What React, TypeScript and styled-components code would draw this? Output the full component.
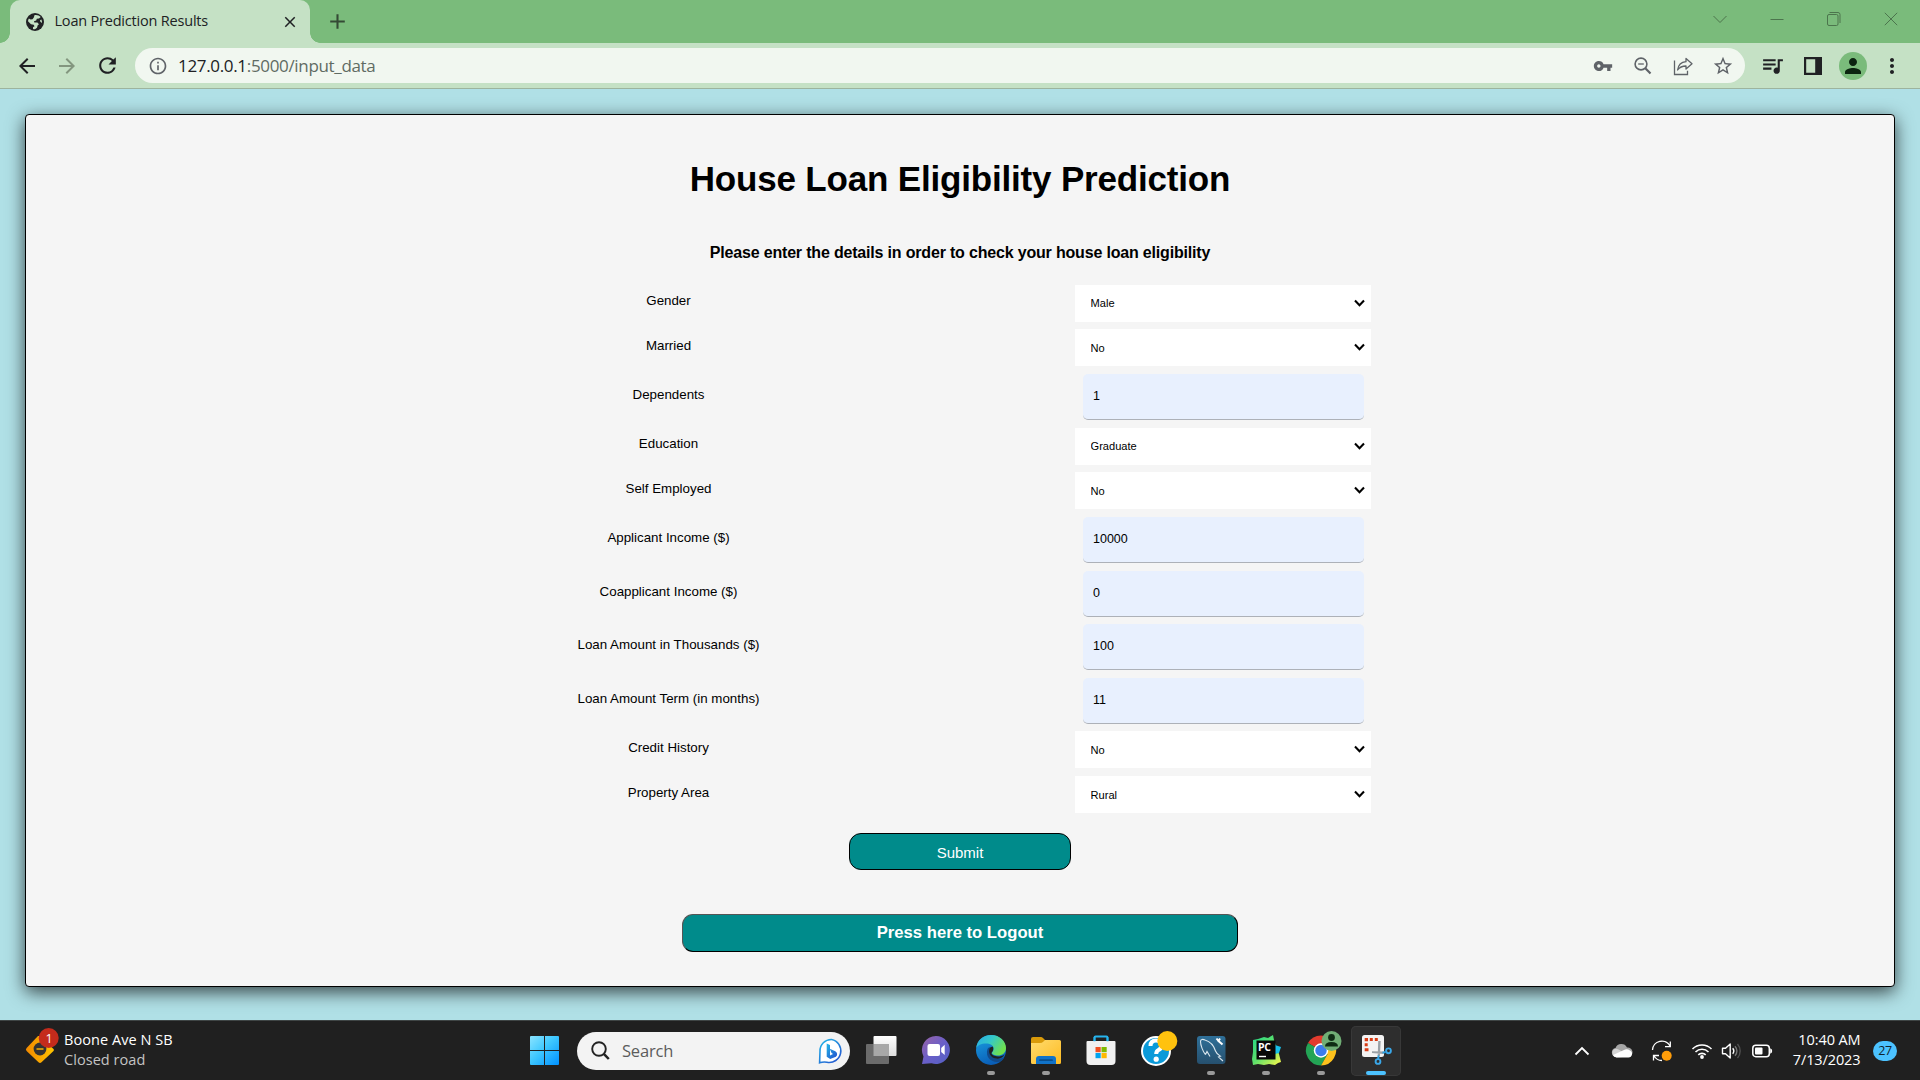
import React from "react";
import styled, { createGlobalStyle } from "styled-components";
import {
  MdArrowBack,
  MdArrowForward,
  MdClose,
  MdInfoOutline,
  MdMoreVert,
  MdPerson,
  MdQueueMusic,
  MdRefresh,
  MdStarBorder,
  MdVpnKey,
  MdAdd,
} from "react-icons/md";

const ui = `"Open Sans", "Noto Sans", sans-serif`;
const arial = `"Liberation Sans", Arial, sans-serif`;

const GlobalStyle = createGlobalStyle`
  *, *::before, *::after { box-sizing: border-box; }
  html, body { margin: 0; padding: 0; }
  body { width: 1920px; height: 1080px; overflow: hidden; }
  svg { display: block; flex: none; }
`;

const Screen = styled.div`
  width: 1920px;
  height: 1080px;
  display: flex;
  flex-direction: column;
  background: #b0e0e6;
  overflow: hidden;
`;

/* ---------- Browser ---------- */

const TabStrip = styled.header`
  height: 43px;
  flex: none;
  display: flex;
  background: #7abb7b;
  padding-left: 10px;
  font-family: ${ui};
`;

const Tab = styled.div`
  position: relative;
  width: 300px;
  height: 43px;
  display: flex;
  align-items: center;
  padding: 0 11px 0 15px;
  background: #c5e1c5;
  border-radius: 10px 10px 0 0;
  color: #202124;
  &::before,
  &::after {
    content: "";
    position: absolute;
    bottom: 0;
    width: 10px;
    height: 10px;
  }
  &::before {
    left: -10px;
    background: radial-gradient(circle at 0 0, transparent 9.5px, #c5e1c5 10px);
  }
  &::after {
    right: -10px;
    background: radial-gradient(circle at 100% 0, transparent 9.5px, #c5e1c5 10px);
  }
`;

const TabTitle = styled.span`
  flex: 1;
  margin-left: 9.5px;
  font-size: 14.5px;
  line-height: 20px;
  letter-spacing: -0.2px;
  white-space: nowrap;
  padding-bottom: 1px;
`;

const NewTab = styled.div`
  width: 55px;
  display: flex;
  align-items: center;
  justify-content: center;
  color: #344a35;
`;

const WindowControls = styled.div`
  margin-left: auto;
  width: 229px;
  height: 37px;
  display: grid;
  grid-template-columns: repeat(4, 57px);
  place-items: center;
`;

const Toolbar = styled.nav`
  height: 46px;
  flex: none;
  display: flex;
  align-items: center;
  background: #c5e1c5;
  border-bottom: 1px solid #9db49e;
  padding-left: 7px;
  color: #202124;
  font-family: ${ui};
`;

const NavButton = styled.div<{ $dim?: boolean }>`
  width: 40px;
  display: flex;
  justify-content: center;
  color: ${(p) => (p.$dim ? "#83967f" : "#202124")};
`;

const AddressBar = styled.div`
  width: 1610px;
  height: 35px;
  margin-left: 8px;
  display: flex;
  align-items: center;
  padding: 0 2.5px 0 12.5px;
  border-radius: 18px;
  background: #f1f7f0;
  color: #5f6368;
`;

const Url = styled.span`
  flex: 1;
  margin-left: 10.5px;
  font-size: 17px;
  line-height: 24px;
  letter-spacing: -0.33px;
  color: #5f6b63;
  b {
    font-weight: 400;
    color: #202124;
  }
`;

const AddressAction = styled.div`
  width: 40px;
  display: flex;
  justify-content: center;
`;

const ToolAction = styled.div<{ $ml?: number }>`
  width: 40px;
  margin-left: ${(p) => p.$ml ?? 0}px;
  display: flex;
  justify-content: center;
`;

const Avatar = styled.div`
  width: 28px;
  height: 28px;
  border-radius: 50%;
  background: #7abb7b;
  color: #0b2410;
  display: grid;
  place-items: center;
`;

/* ---------- Page ---------- */

const Page = styled.main`
  flex: 1;
  padding: 25px 25px 33px;
  display: flex;
  font-family: ${arial};
  color: #000;
`;

const Card = styled.section`
  flex: 1;
  display: flex;
  flex-direction: column;
  align-items: center;
  background: #f5f5f5;
  border: 1px solid #000;
  border-radius: 4px;
  box-shadow: 0 5px 18px rgba(0, 0, 0, 0.7);
`;

const Title = styled.h1`
  margin: 44px 0 0;
  font-size: 35px;
  line-height: 40px;
  font-weight: 700;
  letter-spacing: -0.18px;
`;

const Subtitle = styled.h4`
  margin: 44px 0 0;
  font-size: 16px;
  line-height: 20px;
  font-weight: 700;
  letter-spacing: -0.18px;
`;

const Form = styled.form`
  margin-top: 22px;
  padding-left: 274px;
  width: 1390px;
  display: grid;
  grid-template-columns: 259px 1fr;
  grid-template-rows: 44px 45px 54px 44px 45px 54px 53px 54px 53px 45px 37px;
  align-items: start;
`;

const Label = styled.label<{ $height: number }>`
  height: ${(p) => p.$height}px;
  display: flex;
  align-items: center;
  justify-content: center;
  font-size: 13.33px;
  white-space: nowrap;
`;

const SelectBox = styled.div`
  position: relative;
  width: 296px;
  height: 37px;
  margin-left: 277px;
  svg {
    position: absolute;
    right: 6px;
    top: 14px;
    pointer-events: none;
  }
`;

const Select = styled.select<{ $raised?: boolean }>`
  appearance: none;
  width: 100%;
  height: 100%;
  border: 0;
  border-radius: 0;
  padding: 0 15.5px ${(p) => (p.$raised ? 2 : 0)}px;
  background: #fff;
  color: #000;
  font-family: ${arial};
  font-size: 11.1px;
`;

const Input = styled.input`
  width: 281px;
  height: 46px;
  margin-left: 285px;
  padding: 0 10px 2px;
  border: 0;
  border-bottom: 1px solid #adb1b8;
  border-radius: 5px;
  background: #e8f0fe;
  color: #000;
  font-family: ${arial};
  font-size: 12.5px;
`;

const Submit = styled.button`
  margin-top: 20px;
  width: 222px;
  height: 37px;
  padding: 2px 0 0;
  border: 1px solid #000;
  border-radius: 12px;
  background: #008b8b;
  color: #fff;
  font-family: ${arial};
  font-size: 15px;
`;

const Logout = styled.button`
  margin-top: 44px;
  width: 556px;
  height: 38px;
  padding: 0 0 1px;
  border: 1px solid;
  border-color: #555 #000 #000 #555;
  border-radius: 11px;
  background: #008b8b;
  color: #fff;
  font-family: ${arial};
  font-size: 16.67px;
  font-weight: 700;
`;

/* ---------- Taskbar ---------- */

const Taskbar = styled.footer`
  height: 60px;
  flex: none;
  display: flex;
  align-items: center;
  background: #202020;
  border-top: 1px solid #3f4545;
  color: #fff;
  font-family: ${ui};
`;

const Widget = styled.div`
  width: 530px;
  display: flex;
  align-items: center;
  gap: 4px;
  padding-left: 24px;
`;

const RoadSlot = styled.div`
  height: 48px;
`;

const TwoLines = styled.div<{ $right?: boolean }>`
  display: flex;
  flex-direction: column;
  padding-bottom: 2px;
  text-align: ${(p) => (p.$right ? "right" : "left")};
  font-size: 14.5px;
  line-height: 20px;
  letter-spacing: ${(p) => (p.$right ? -0.1 : 0.05)}px;
  white-space: nowrap;
`;

const Muted = styled.span`
  color: #c4c4c4;
`;

const SearchPill = styled.div`
  margin-left: 18px;
  width: 273px;
  height: 38px;
  border-radius: 19px;
  background: #f3f3f3;
  display: flex;
  align-items: center;
  padding: 0 6px 0 14px;
  color: #5c5c5c;
  font-size: 16.5px;
  letter-spacing: -0.2px;
`;

const SearchText = styled.span`
  flex: 1;
  margin-left: 12px;
`;

const Apps = styled.div`
  margin-left: 3.5px;
  display: flex;
`;

const AppSlot = styled.div`
  width: 55px;
  height: 59px;
  display: flex;
  justify-content: center;
  align-items: center;
`;

const Tile = styled.div<{ $active?: boolean }>`
  width: 50px;
  height: 50px;
  border-radius: 5px;
  background: ${(p) => (p.$active ? "#2e2e2e" : "transparent")};
  box-shadow: ${(p) => (p.$active ? "inset 0 0 0 1px #383838" : "none")};
  display: flex;
  flex-direction: column;
  align-items: center;
  padding-top: 4px;
`;

const IconSlot = styled.div`
  width: 32px;
  height: 40px;
  display: flex;
  align-items: center;
  justify-content: center;
`;

const Running = styled.span<{ $active?: boolean }>`
  width: ${(p) => (p.$active ? 20 : 8)}px;
  height: 4px;
  margin-top: 1px;
  border-radius: 2px;
  background: ${(p) => (p.$active ? "#4cc2ff" : "#9a9a9a")};
`;

const Tray = styled.div`
  margin-left: auto;
  display: flex;
  align-items: center;
  padding-right: 23px;
`;

const TrayIcon = styled.div<{ $w: number }>`
  width: ${(p) => p.$w}px;
  display: flex;
  justify-content: center;
`;

const Clock = styled.div`
  width: 79px;
  margin-right: 12.5px;
  display: flex;
  justify-content: flex-end;
`;

const Count = styled.div`
  width: 24px;
  height: 20px;
  border-radius: 10px;
  background: #4cc2ff;
  color: #10222c;
  font-size: 12.5px;
  line-height: 19px;
  letter-spacing: -0.3px;
  text-align: center;
`;

/* ---------- Icons ---------- */

const Globe = () => (
  <svg width="20" height="20" viewBox="0 0 20 20">
    <circle cx="10" cy="10" r="9" fill="#202124" />
    <path
      d="M9.600 3C12 2.600 14.300 3.300 15.700 5L14 6.600 11.800 6.800 11.200 8.400 9 9.200 9.300 10.400H12.400L14 12.300 12.700 13.300 12 15.700 10.300 17.100Q9 17.200 8 16.900L8 15.300 9.500 14.300 8.700 12.700 6 12.200 3 9.200Q3.100 7.700 3.900 6.400L5.600 7.500 7.500 7.200 8.800 5.600Z"
      fill="#c5e1c5"
    />
    <path d="M16.400 7.500Q17.200 9.300 16.900 11L15.400 9.700 15 8.300Z" fill="#c5e1c5" />
  </svg>
);

const ZoomOut = () => (
  <svg width="20" height="20" viewBox="0 0 20 20" fill="none" stroke="#5f6368">
    <circle cx="8" cy="8" r="5.900" strokeWidth="1.600" />
    <path d="M12.300 12.300 17.500 17.500" strokeWidth="2.200" />
    <path d="M5.200 8h5.600" strokeWidth="1.300" />
  </svg>
);

const Share = () => (
  <svg width="22" height="20" viewBox="0 0 22 20" fill="none" stroke="#5f6368" strokeWidth="1.300">
    <path d="M2.500 4.500v14h13V14.800" />
    <path d="M14 2.400 20 7.700 14 13V10C10.300 10 7.700 11 5.600 14 6.200 9.400 9 6.200 14 5.700Z" strokeLinejoin="round" />
  </svg>
);

const SidePanel = () => (
  <svg width="18" height="18" viewBox="0 0 18 18">
    <path fill="#202124" fillRule="evenodd" d="M0 0h18v18H0ZM2.200 2.200v13.600h9V2.200Z" />
  </svg>
);

const Chevron = () => (
  <svg width="11" height="9" viewBox="0 0 11 9" fill="none" stroke="#000" strokeWidth="2.100">
    <path d="M1 1.600 5.500 6.200 10 1.600" />
  </svg>
);

const Road = () => (
  <svg width="36" height="38" viewBox="0 0 36 38">
    <defs>
      <linearGradient id="road" x1="0" x2="1">
        <stop offset="0" stopColor="#f28a00" />
        <stop offset="1" stopColor="#ffc400" />
      </linearGradient>
    </defs>
    <path d="M16 9 29.500 22a1.500 1.500 0 0 1 0 2L17.500 35.200a2.200 2.200 0 0 1-3 0L2.600 24a2.200 2.200 0 0 1 0-3L14 9Z" fill="url(#road)" />
    <circle cx="16" cy="22" r="6.400" fill="#333" />
    <path d="M12.500 22h7" stroke="#f7b000" strokeWidth="1.500" />
    <circle cx="24.700" cy="11" r="10" fill="#c42b1c" />
    <text x="25" y="15.500" fill="#fff" fontSize="12.500" textAnchor="middle" fontFamily="Open Sans, sans-serif">1</text>
  </svg>
);

const WindowsLogo = () => (
  <svg width="29" height="29" viewBox="0 0 29 29">
    <defs>
      <linearGradient id="win" x1="0" y1="0" x2="1" y2="1">
        <stop offset="0" stopColor="#8be4ff" />
        <stop offset=".45" stopColor="#3fc8ff" />
        <stop offset="1" stopColor="#0091ff" />
      </linearGradient>
    </defs>
    <path fill="url(#win)" d="M1 0h13v14H0V1Q0 0 1 0ZM15 0h13q1 0 1 1v13H15ZM0 15h14v14H1q-1 0-1-1ZM15 15h14v13q0 1-1 1H15Z" />
  </svg>
);

const Glass = () => (
  <svg width="19" height="20" viewBox="0 0 19 20" fill="none" stroke="#222">
    <circle cx="8" cy="8" r="6.800" strokeWidth="1.900" />
    <path d="M12.800 12.800 17.800 18" strokeWidth="2.500" />
  </svg>
);

const Bing = () => (
  <svg width="26" height="26" viewBox="0 0 26 26">
    <defs>
      <linearGradient id="bing" x1="0" y1="0" x2=".8" y2="1">
        <stop offset="0" stopColor="#23b8e8" />
        <stop offset="1" stopColor="#2458d0" />
      </linearGradient>
    </defs>
    <path d="M13.500 1.500A11.300 11.300 0 1 1 9 24.200Q5 23.600 1.600 24.800L2 13A11.300 11.300 0 0 1 13.500 1.500Z" fill="#fff" stroke="url(#bing)" strokeWidth="1.600" />
    <path d="M8.700 5.500 12 7v10.500l3-1.600-1.600-1.100-1.700-4 5.600 2.500c2.300 1.400 2.500 4 .6 5.400L12.200 21 8.700 18.800Z" fill="url(#bing)" />
  </svg>
);

const TaskView = () => (
  <svg width="32" height="32" viewBox="0 0 32 32">
    <defs>
      <linearGradient id="tv" x1="0" y1="0" x2="0" y2="1">
        <stop offset="0" stopColor="#fff" />
        <stop offset="1" stopColor="#ddd" />
      </linearGradient>
    </defs>
    <rect x="8.500" y="2" width="23" height="20" rx="1" fill="url(#tv)" />
    <rect x="1" y="10" width="23" height="20" rx="1" fill="#6b6b6b" />
    <path d="M8.500 10H24v12H8.500Z" fill="#a8a8a8" />
  </svg>
);

const Chat = () => (
  <svg width="32" height="32" viewBox="0 0 32 32">
    <defs>
      <linearGradient id="chat" x1="0" y1="0" x2="1" y2="1">
        <stop offset="0" stopColor="#9a63a6" />
        <stop offset=".5" stopColor="#6a5fc8" />
        <stop offset="1" stopColor="#5360c4" />
      </linearGradient>
    </defs>
    <path d="M16 2a14 14 0 1 1-4.500 27.300L2 30l1.500-7.500A14 14 0 0 1 16 2Z" fill="url(#chat)" />
    <rect x="7.500" y="10" width="12.500" height="12" rx="2" fill="#fff" />
    <path d="m21.200 14 3.500-3.200V21L21.200 18Z" fill="#fff" />
  </svg>
);

const Edge = () => (
  <svg width="32" height="32" viewBox="0 0 32 32">
    <defs>
      <linearGradient id="e1" x1="0" y1="0" x2="1" y2=".5">
        <stop offset="0" stopColor="#27a9e8" />
        <stop offset=".5" stopColor="#35c8c8" />
        <stop offset="1" stopColor="#6fe04f" />
      </linearGradient>
      <linearGradient id="e2" x1="0" y1="0" x2=".4" y2="1">
        <stop offset="0" stopColor="#1ba1e2" />
        <stop offset="1" stopColor="#0a5fb8" />
      </linearGradient>
    </defs>
    <circle cx="16" cy="16" r="15" fill="url(#e2)" />
    <path d="M1.200 14C2 6 8.500 1 16 1c9 0 15 6.500 15 13 0 5-4 7.500-8 7.500-3.600 0-6-1.400-6-2.600 0-.9 1.600-1.700 1.600-4.200C18.600 11 15 9.500 11 9.500 6 9.500 2.500 11.500 1.200 14Z" fill="url(#e1)" />
    <path d="M12.500 15c-2.500 8 3.500 13 9.500 13 3.500 0 6-1.500 7.200-4.500-2.200 1-4 1.200-6 1.200-5 0-8.700-3-8.700-6.700 0-2.500 1.500-4 4.200-4.500-3-1.300-5.400-.3-6.200 1.500Z" fill="#114a8b" />
    <path d="M29.500 20.500c-2 1.500-4.500 2-6.500 2-4 0-6.500-1.700-6.500-3.400 0-1 1.800-1.600 1.800-4.400 0-1-.5-1.800-1-2.200-2 .5-3.500 2.500-3.200 5.500.5 4.500 5 7 9 6.700 3-.2 5-1.500 6.400-4.200Z" fill="#202020" />
  </svg>
);

const Folder = () => (
  <svg width="32" height="32" viewBox="0 0 32 32">
    <defs>
      <linearGradient id="fold" x1="0" y1="0" x2="1" y2="1">
        <stop offset="0" stopColor="#ffdb6e" />
        <stop offset="1" stopColor="#fdbb22" />
      </linearGradient>
    </defs>
    <path d="M1 5q0-2 2-2h8q1 0 2 1l2 2v8H1Z" fill="#d99a0a" />
    <path d="M1 9h9q2 0 3.500-1.500L15 6h14.500Q31 6 31 7.500v21q0 1.500-1.500 1.500h-27Q1 30 1 28.500Z" fill="url(#fold)" />
    <path d="M6 30v-5q0-3 3-3h14q3 0 3 3v5Z" fill="#1173c9" />
    <path d="M10 26.200h12" stroke="#094f8f" strokeWidth="1.800" strokeLinecap="round" />
  </svg>
);

const Store = () => (
  <svg width="32" height="32" viewBox="0 0 32 32">
    <path d="M9.500 9V3.500q0-1 1-1h11q1 0 1 1V9" fill="none" stroke="#26b4ee" strokeWidth="1.900" />
    <path d="M1.500 8q0-1 1-1h27q1 0 1 1v19q0 4-4 4h-21q-4 0-4-4Z" fill="#f1f1f1" />
    <path d="M9.500 3v4.300M22.500 3v4.300" stroke="#26b4ee" strokeWidth="1.900" />
    <path fill="#f25022" d="M10.500 13h5.200v5.200h-5.200z" />
    <path fill="#7fba00" d="M16.500 13h5.200v5.200h-5.200z" />
    <path fill="#00a4ef" d="M10.500 19h5.200v5.200h-5.200z" />
    <path fill="#ffb900" d="M16.500 19h5.200v5.200h-5.200z" />
  </svg>
);

const Help = () => (
  <svg width="44" height="38" viewBox="-5.500 1.500 44 38">
    <circle cx="16.500" cy="21.500" r="14" fill="#0b9ad9" stroke="#fff" strokeWidth="2" />
    <path d="M11 16.500q0-5.500 5.500-5.500t5.500 5q0 3-3 4.600-2.300 1.200-2.300 4" fill="none" stroke="#fff" strokeWidth="4" />
    <circle cx="16.700" cy="29.700" r="2.600" fill="#fff" />
    <circle cx="27.800" cy="11.500" r="10" fill="#ffc20e" />
  </svg>
);

const MySql = () => (
  <svg width="32" height="32" viewBox="0 0 32 32">
    <defs>
      <linearGradient id="sql" x1="0" y1="0" x2="0" y2="1">
        <stop offset="0" stopColor="#2f7099" />
        <stop offset="1" stopColor="#26506e" />
      </linearGradient>
    </defs>
    <rect x="2" y="2" width="28.500" height="28" rx="3" fill="url(#sql)" />
    <path d="M10.500 20.500C8 18 5.500 11 5.500 7.500 5.500 5 8 5 10 6c5 1.500 9 6 10.500 11 .8 2.500 2.500 3.500 5 5.200l-2 .8 4.500 4M10.500 20.500l1.500-3 3 5" fill="none" stroke="#dbe7ee" strokeWidth="1.100" />
    <path d="m21.500 4.500 2 2.500M25 4.500 23.500 7 27.500 10.500" stroke="#fff" strokeWidth="2" fill="none" />
  </svg>
);

const PyCharm = () => (
  <svg width="32" height="32" viewBox="0 0 32 32">
    <defs>
      <linearGradient id="pc" x1="0" y1="0" x2="1" y2="1">
        <stop offset="0" stopColor="#21d789" />
        <stop offset=".5" stopColor="#5fe06a" />
        <stop offset="1" stopColor="#fcf84a" />
      </linearGradient>
    </defs>
    <path d="m3 6 5-1 6-2 4 1 5-3 1 5 2 6 3 8 2 8-3 1-3 2-6-1-5 1-6-1-5 1-1-6 1-7Z" fill="url(#pc)" />
    <path d="m25 11 6 2-2 6-4 1Z" fill="#17bfe8" />
    <path d="M6.500 6.500h19v19h-19z" fill="#080808" />
    <text x="8" y="16.800" fill="#fff" fontSize="10.500" fontWeight="700" fontFamily="Open Sans, sans-serif" letterSpacing="-.3">PC</text>
    <path d="M9 22.500h7" stroke="#fff" strokeWidth="1.400" />
  </svg>
);

const Chrome = () => (
  <svg width="42" height="38" viewBox="-3 1.500 42 38">
    <path d="M18 21 5 13.500A15 15 0 0 1 31 13.500Z" fill="#e33b2e" />
    <path d="M18 21 5 13.500A15 15 0 0 0 18 36L24.500 24.700Z" fill="#23a455" />
    <path d="M18 21 31 13.500A15 15 0 0 1 18 36l6.500-11.200Z" fill="#fdc11c" />
    <path d="M18 13.800h13.200L24.500 17Z" fill="#e33b2e" />
    <circle cx="18" cy="21" r="7.200" fill="#fff" />
    <circle cx="18" cy="21" r="5.700" fill="#3b7ded" />
    <circle cx="28.500" cy="11.500" r="10" fill="#70ae75" />
    <circle cx="28.500" cy="8" r="3.400" fill="#0f2c14" />
    <path d="M22 17q0-4.500 6.500-4.500t6.500 4.500Z" fill="#0f2c14" />
  </svg>
);

const Snip = () => (
  <svg width="34" height="32" viewBox="0 0 34 32">
    <rect x="3" y="1" width="22" height="22" rx="2.500" fill="#f3f3f3" />
    <path
      d="M5.700 4h3.300v3.300H5.700ZM10.800 4h3v3h-3ZM15.800 4h3v3h-3ZM5.700 9.300h3v3h-3ZM5.700 14.300h3.800v3H5.700Z"
      fill="#d83b14"
    />
    <path d="M19.200 7h2.500l-.8 15h-2.200ZM13 17.300l11.500.2v2.400L13 19Z" fill="#9aa1a6" />
    <path d="m19.700 21.500-.7 3.500M23.500 18.700l3-.7" stroke="#2b9fe0" strokeWidth="2" />
    <circle cx="19" cy="27.500" r="2.400" fill="none" stroke="#3aa7e8" strokeWidth="1.900" />
    <circle cx="29.500" cy="16.800" r="2.400" fill="none" stroke="#3aa7e8" strokeWidth="1.900" />
  </svg>
);

const Cloud = () => (
  <svg width="22" height="16" viewBox="0 0 22 16">
    <path d="M5 14a4.500 4.500 0 0 1-.5-8.900A6.300 6.300 0 0 1 16 4.600a4.700 4.700 0 0 1 1.500 9.400Z" fill="#a5a5a5" />
    <path d="M5.500 14.300a4.500 4.500 0 0 1-2-8.300Q6 5 9 7.200l9 6.500Z" fill="#d4d4d4" />
    <path d="M5.500 14.500A4 4 0 0 1 2 12L13 7q3-1.500 6 .5a3.700 3.700 0 0 1-1.500 7Z" fill="#fff" />
  </svg>
);

const Sync = () => (
  <svg width="24" height="24" viewBox="0 0 24 24" fill="none" stroke="#fff" strokeWidth="1.300">
    <path d="M2.500 11A9.300 9.300 0 0 1 20 7M20.300 2.500V7.600H15" />
    <path d="M12 21.500a9.300 9.300 0 0 1-8-4.500M3.500 21.500v-5H9" />
    <circle cx="16.700" cy="16.700" r="5" fill="#ff9d0a" stroke="none" />
  </svg>
);

const Wifi = () => (
  <svg width="22" height="18" viewBox="0 0 22 18" fill="none" stroke="#fff" strokeWidth="1.600">
    <path d="M1.500 7a13.300 13.300 0 0 1 19 0M4.500 10a9.200 9.200 0 0 1 13 0M7.300 12.900a5.200 5.200 0 0 1 7.400 0" />
    <circle cx="11" cy="15" r="1.900" fill="#fff" stroke="none" />
  </svg>
);

const Speaker = () => (
  <svg width="22" height="18" viewBox="0 0 22 18" fill="none" stroke="#fff" strokeWidth="1.400">
    <path d="M1.500 6.200h3L9.200 2v14l-4.700-4.200h-3Z" strokeLinejoin="round" />
    <path d="M11.700 6.300a4.200 4.200 0 0 1 0 5.400" />
    <path d="M14 4.200a7 7 0 0 1 0 9.600" stroke="#777" />
    <path d="M16.500 2a10.500 10.500 0 0 1 0 14" stroke="#505050" />
  </svg>
);

const Battery = () => (
  <svg width="22" height="16" viewBox="0 0 22 16">
    <rect x="1.800" y="2.200" width="16.500" height="11.500" rx="3" fill="none" stroke="#fff" strokeWidth="1.500" />
    <rect x="4" y="4.500" width="7.500" height="7" rx="1" fill="#fff" />
    <path d="M19.200 5.300q2 .6 2 2.700t-2 2.700Z" fill="#fff" />
  </svg>
);

/* ---------- Content ---------- */

type Field = { label: string; value: string; kind: "select" | "input"; raised?: boolean };

const fields: Field[] = [
  { label: "Gender", value: "Male", kind: "select", raised: true },
  { label: "Married", value: "No", kind: "select" },
  { label: "Dependents", value: "1", kind: "input" },
  { label: "Education", value: "Graduate", kind: "select", raised: true },
  { label: "Self Employed", value: "No", kind: "select" },
  { label: "Applicant Income ($)", value: "10000", kind: "input" },
  { label: "Coapplicant Income ($)", value: "0", kind: "input" },
  { label: "Loan Amount in Thousands ($)", value: "100", kind: "input" },
  { label: "Loan Amount Term (in months)", value: "11", kind: "input" },
  { label: "Credit History", value: "No", kind: "select" },
  { label: "Property Area", value: "Rural", kind: "select" },
];

const labelHeight = (f: Field) => (f.kind === "input" ? 40 : f.raised ? 30 : 32);

const apps: { icon: React.ReactNode; running?: boolean; active?: boolean }[] = [
  { icon: <TaskView /> },
  { icon: <Chat /> },
  { icon: <Edge />, running: true },
  { icon: <Folder />, running: true },
  { icon: <Store /> },
  { icon: <Help /> },
  { icon: <MySql />, running: true },
  { icon: <PyCharm />, running: true },
  { icon: <Chrome />, running: true },
  { icon: <Snip />, running: true, active: true },
];

export default function App() {
  return (
    <Screen>
      <GlobalStyle />
      <TabStrip>
        <Tab>
          <Globe />
          <TabTitle>Loan Prediction Results</TabTitle>
          <MdClose size={18} />
        </Tab>
        <NewTab>
          <MdAdd size={25} />
        </NewTab>
        <WindowControls>
          <svg width="14" height="14" fill="none" stroke="#4c754d">
            <path d="M.5 4 7 10.500 13.500 4" />
          </svg>
          <svg width="14" height="14" fill="none" stroke="#4c754d">
            <path d="M.5 7.500h13" />
          </svg>
          <svg width="14" height="14" fill="none" stroke="#4c754d">
            <rect x=".5" y="2.500" width="10.500" height="11" rx="1.500" />
            <path d="M2.500 .5H11q2 0 2 2V11" />
          </svg>
          <svg width="14" height="14" fill="none" stroke="#4c754d">
            <path d="M.8 .8 13.200 13.200M13.200 .8.8 13.200" />
          </svg>
        </WindowControls>
      </TabStrip>
      <Toolbar>
        <NavButton>
          <MdArrowBack size={24} />
        </NavButton>
        <NavButton $dim>
          <MdArrowForward size={24} />
        </NavButton>
        <NavButton>
          <MdRefresh size={25} />
        </NavButton>
        <AddressBar>
          <MdInfoOutline size={20} />
          <Url>
            <b>127.0.0.1</b>:5000/input_data
          </Url>
          <AddressAction>
            <MdVpnKey size={20} />
          </AddressAction>
          <AddressAction>
            <ZoomOut />
          </AddressAction>
          <AddressAction>
            <Share />
          </AddressAction>
          <AddressAction>
            <MdStarBorder size={22} />
          </AddressAction>
        </AddressBar>
        <ToolAction $ml={7}>
          <MdQueueMusic size={25} />
        </ToolAction>
        <ToolAction $ml={1}>
          <SidePanel />
        </ToolAction>
        <ToolAction>
          <Avatar>
            <MdPerson size={24} />
          </Avatar>
        </ToolAction>
        <ToolAction $ml={-1}>
          <MdMoreVert size={24} />
        </ToolAction>
      </Toolbar>
      <Page>
        <Card>
          <Title>House Loan Eligibility Prediction</Title>
          <Subtitle>Please enter the details in order to check your house loan eligibility</Subtitle>
          <Form>
            {fields.map((f) => (
              <React.Fragment key={f.label}>
                <Label $height={labelHeight(f)}>{f.label}</Label>
                {f.kind === "select" ? (
                  <SelectBox>
                    <Select defaultValue={f.value} $raised={f.raised}>
                      <option>{f.value}</option>
                    </Select>
                    <Chevron />
                  </SelectBox>
                ) : (
                  <Input defaultValue={f.value} />
                )}
              </React.Fragment>
            ))}
          </Form>
          <Submit type="button">Submit</Submit>
          <Logout type="button">Press here to Logout</Logout>
        </Card>
      </Page>
      <Taskbar>
        <Widget>
          <RoadSlot>
            <Road />
          </RoadSlot>
          <TwoLines>
            <span>Boone Ave N SB</span>
            <Muted>Closed road</Muted>
          </TwoLines>
        </Widget>
        <WindowsLogo />
        <SearchPill>
          <Glass />
          <SearchText>Search</SearchText>
          <Bing />
        </SearchPill>
        <Apps>
          {apps.map((a, i) => (
            <AppSlot key={i}>
              <Tile $active={a.active}>
                <IconSlot>{a.icon}</IconSlot>
                {a.running && <Running $active={a.active} />}
              </Tile>
            </AppSlot>
          ))}
        </Apps>
        <Tray>
          <TrayIcon $w={40}>
            <svg width="16" height="10" fill="none" stroke="#fff" strokeWidth="1.800">
              <path d="M1.500 8.500 8 2l6.500 6.500" />
            </svg>
          </TrayIcon>
          <TrayIcon $w={40}>
            <Cloud />
          </TrayIcon>
          <TrayIcon $w={40}>
            <Sync />
          </TrayIcon>
          <TrayIcon $w={40}>
            <Wifi />
          </TrayIcon>
          <TrayIcon $w={20}>
            <Speaker />
          </TrayIcon>
          <TrayIcon $w={40}>
            <Battery />
          </TrayIcon>
          <Clock>
            <TwoLines $right>
              <span>10:40 AM</span>
              <span>7/13/2023</span>
            </TwoLines>
          </Clock>
          <Count>27</Count>
        </Tray>
      </Taskbar>
    </Screen>
  );
}
